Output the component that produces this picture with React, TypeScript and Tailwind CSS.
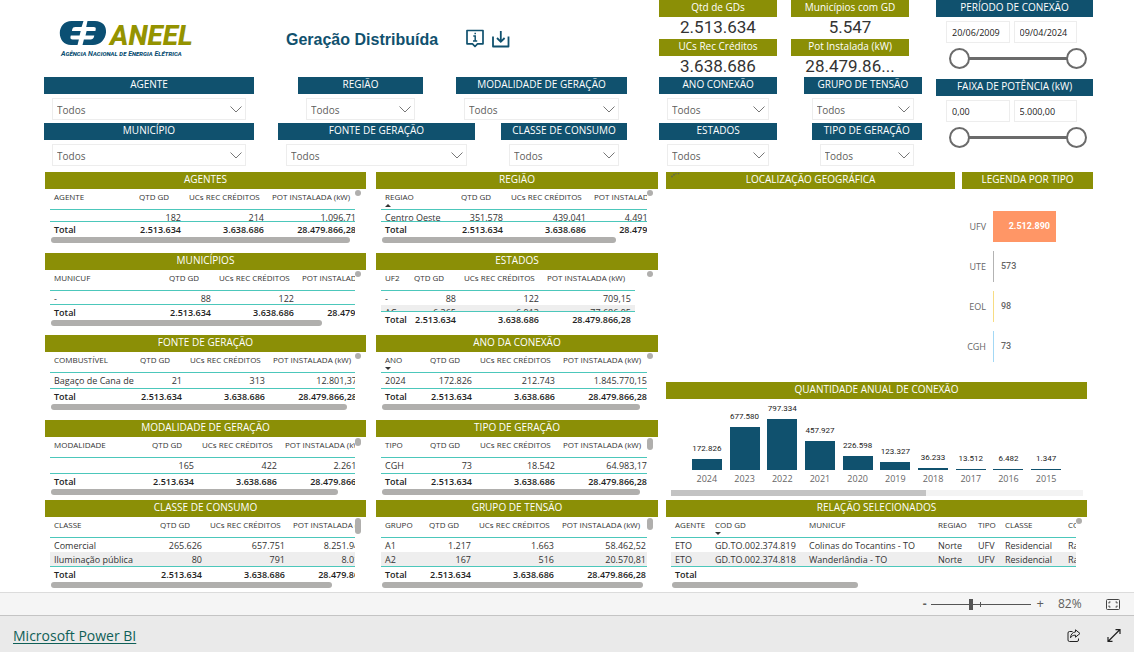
import React from "react";

type Sort = { column: number; direction: "up" | "down" };

type GridData = {
  title: string;
  cols: string;
  head: string[];
  rows: string[][];
  total: string[];
  bodyHeight: string;
  numericFrom: number;
  tableWidth?: string;
  sort?: Sort;
  thumb?: number;
  vThumb: string;
  spacing: string;
};

const METRICS = ["QTD GD", "UCs REC CRÉDITOS", "POT INSTALADA (kW)"];
const TOTALS = ["Total", "2.513.634", "3.638.686", "28.479.866,28"];

const leftTables: GridData[] = [
  {
    title: "AGENTES",
    cols: "grid-cols-[85px_50px_83px_92px]",
    head: ["AGENTE", ...METRICS],
    rows: [["", "182", "214", "1.096,71"]],
    total: TOTALS,
    bodyHeight: "h-[11px]",
    numericFrom: 1,
    thumb: 98,
    vThumb: "h-1.5",
    spacing: "mb-2.5",
  },
  {
    title: "MUNICÍPIOS",
    cols: "grid-cols-[115px_50px_83px_92px]",
    head: ["MUNICUF", ...METRICS],
    rows: [["-", "88", "122", "709,15"]],
    total: TOTALS,
    bodyHeight: "h-[13px]",
    numericFrom: 1,
    thumb: 89,
    vThumb: "h-1.5",
    spacing: "mb-[9px]",
  },
  {
    title: "FONTE DE GERAÇÃO",
    cols: "grid-cols-[86px_50px_83px_92px]",
    head: ["COMBUSTÍVEL", ...METRICS],
    rows: [["Bagaço de Cana de", "21", "313", "12.801,37"]],
    total: TOTALS,
    bodyHeight: "h-[15px]",
    numericFrom: 1,
    thumb: 97,
    vThumb: "h-1.5",
    spacing: "mb-2.5",
  },
  {
    title: "MODALIDADE DE GERAÇÃO",
    cols: "grid-cols-[98px_50px_83px_92px]",
    head: ["MODALIDADE", ...METRICS],
    rows: [["", "165", "422", "2.261,10"]],
    total: TOTALS,
    bodyHeight: "h-[15px]",
    numericFrom: 1,
    thumb: 94,
    vThumb: "h-2",
    spacing: "mb-[5px]",
  },
  {
    title: "CLASSE DE CONSUMO",
    cols: "grid-cols-[106px_50px_83px_92px]",
    head: ["CLASSE", ...METRICS],
    rows: [
      ["Comercial", "265.626", "657.751", "8.251.946,20"],
      ["Iluminação pública", "80", "791", "8.012,30"],
    ],
    total: TOTALS,
    bodyHeight: "h-[28px]",
    numericFrom: 1,
    thumb: 92,
    vThumb: "h-4",
    spacing: "mb-1",
  },
];

const middleTables: GridData[] = [
  {
    title: "REGIÃO",
    cols: "grid-cols-[76px_50px_83px_92px]",
    head: ["REGIAO", ...METRICS],
    rows: [["Centro Oeste", "351.578", "439.041", "4.491.020,11"]],
    total: TOTALS,
    bodyHeight: "h-[11px]",
    numericFrom: 1,
    sort: { column: 0, direction: "up" },
    thumb: 88,
    vThumb: "h-1.5",
    spacing: "mb-2.5",
  },
  {
    title: "ESTADOS",
    cols: "grid-cols-[29px_50px_83px_92px]",
    tableWidth: "w-[254px]",
    head: ["UF2", ...METRICS],
    rows: [
      ["-", "88", "122", "709,15"],
      ["AC", "6.365", "6.913", "77.686,95"],
    ],
    total: TOTALS,
    bodyHeight: "h-[20px]",
    numericFrom: 1,
    vThumb: "h-1.5",
    spacing: "mb-2",
  },
  {
    title: "ANO DA CONEXÃO",
    cols: "grid-cols-[45px_50px_83px_92px]",
    head: ["ANO", ...METRICS],
    rows: [["2024", "172.826", "212.743", "1.845.770,15"]],
    total: TOTALS,
    bodyHeight: "h-[15px]",
    numericFrom: 1,
    sort: { column: 0, direction: "down" },
    thumb: 97,
    vThumb: "h-1.5",
    spacing: "mb-2.5",
  },
  {
    title: "TIPO DE GERAÇÃO",
    cols: "grid-cols-[45px_50px_83px_92px]",
    head: ["TIPO", ...METRICS],
    rows: [["CGH", "73", "18.542", "64.983,17"]],
    total: TOTALS,
    bodyHeight: "h-[15px]",
    numericFrom: 1,
    thumb: 97,
    vThumb: "h-3",
    spacing: "mb-[5px]",
  },
  {
    title: "GRUPO DE TENSÃO",
    cols: "grid-cols-[44px_50px_83px_92px]",
    head: ["GRUPO", ...METRICS],
    rows: [
      ["A1", "1.217", "1.663", "58.462,52"],
      ["A2", "167", "516", "20.570,81"],
    ],
    total: TOTALS,
    bodyHeight: "h-[28px]",
    numericFrom: 1,
    thumb: 98,
    vThumb: "h-3",
    spacing: "mb-1",
  },
];

const selectedTable: GridData = {
  title: "RELAÇÃO SELECIONADOS",
  cols: "grid-cols-[40px_94px_129px_40px_27px_63px_60px]",
  head: ["AGENTE", "COD GD", "MUNICUF", "REGIAO", "TIPO", "CLASSE", "COMBUSTÍVEL"],
  rows: [
    ["ETO", "GD.TO.002.374.819", "Colinas do Tocantins - TO", "Norte", "UFV", "Residencial", "Radiação solar"],
    ["ETO", "GD.TO.002.374.818", "Wanderlândia - TO", "Norte", "UFV", "Residencial", "Radiação solar"],
  ],
  total: ["Total"],
  bodyHeight: "h-[28px]",
  numericFrom: 99,
  sort: { column: 1, direction: "down" },
  thumb: 46,
  vThumb: "h-1.5",
  spacing: "mb-1",
};

const years = [
  { year: "2024", label: "172.826", height: 11 },
  { year: "2023", label: "677.580", height: 43 },
  { year: "2022", label: "797.334", height: 51 },
  { year: "2021", label: "457.927", height: 29 },
  { year: "2020", label: "226.598", height: 14 },
  { year: "2019", label: "123.327", height: 8 },
  { year: "2018", label: "36.233", height: 2 },
  { year: "2017", label: "13.512", height: 1 },
  { year: "2016", label: "6.482", height: 1 },
  { year: "2015", label: "1.347", height: 1 },
];

const types = [
  { name: "UTE", value: "573", color: "bg-[#b3b3b3]" },
  { name: "EOL", value: "98", color: "bg-[#f7dc83]" },
  { name: "CGH", value: "73", color: "bg-[#a3d8f5]" },
];

function Bar({ children, tone = "olive" }: { children: React.ReactNode; tone?: "olive" | "blue" }) {
  return (
    <h2
      className={
        "h-[17px] text-center text-[10px] leading-[15px] whitespace-nowrap text-white " +
        (tone === "olive" ? "bg-[#8b8f06]" : "bg-[#10516e]")
      }
    >
      {children}
    </h2>
  );
}

function DataTable({ data }: { data: GridData }) {
  const align = (i: number) => (i >= data.numericFrom ? "text-right" : "text-left");
  return (
    <section className={data.spacing}>
      <Bar>{data.title}</Bar>
      <div className="flex px-[5px]">
        <div className="min-w-0 flex-1 overflow-hidden">
          <table className={"block text-[9px] whitespace-nowrap text-[#333] " + (data.tableWidth ?? "w-full")}>
            <thead className="block h-[21px] border-b border-[#4cc7bb]">
              <tr className={"grid " + data.cols}>
                {data.head.map((h, i) => (
                  <th key={h} scope="col" className="pt-0.5 pl-1 text-left text-[8px] leading-3 font-normal text-[#333]">
                    {h}
                    {data.sort?.column === i && (
                      <svg className="block" width="6" height="4" viewBox="0 0 6 4" aria-hidden="true">
                        <path d={data.sort.direction === "up" ? "M0 4 3 1 6 4Z" : "M0 1 3 4 6 1Z"} fill="#333" />
                      </svg>
                    )}
                  </th>
                ))}
              </tr>
            </thead>
            <tbody className={"block overflow-hidden " + data.bodyHeight}>
              {data.rows.map((row, r) => (
                <tr key={r} className={"grid h-3.5 " + data.cols + (r % 2 ? " bg-[#eeeeee]" : "")}>
                  {row.map((c, i) => (
                    <td key={i} className={"px-1 leading-[15px] " + align(i)}>
                      {c}
                    </td>
                  ))}
                </tr>
              ))}
            </tbody>
            <tfoot className="block h-4 border-t border-[#4cc7bb]">
              <tr className={"grid " + data.cols}>
                {data.total.map((c, i) => (
                  <td key={i} className={"px-1 leading-[15px] font-semibold text-[#222] " + align(i)}>
                    {c}
                  </td>
                ))}
              </tr>
            </tfoot>
          </table>
          {data.thumb && (
            <div className="h-1.5">
              <div className="ml-px h-1.5 rounded-full bg-[#b0afad]" style={{ width: `${data.thumb}%` }} />
            </div>
          )}
        </div>
        <div className={"mt-px w-1.5 rounded-full bg-[#b0afad] " + data.vThumb} />
      </div>
    </section>
  );
}

function Filter({ id, label, className }: { id: string; label: string; className: string }) {
  return (
    <div className={"min-w-0 " + className}>
      <label
        htmlFor={id}
        className="block h-[17px] bg-[#10516e] text-center text-[10px] leading-[15px] whitespace-nowrap text-white"
      >
        {label}
      </label>
      <div className="mx-2 mt-1 grid items-center">
        <select
          id={id}
          className="col-start-1 row-start-1 h-[22px] w-full appearance-none border border-[#ededed] bg-white pt-0.5 pl-1 text-[10px] text-[#605e5c]"
        >
          <option>Todos</option>
        </select>
        <svg
          className="pointer-events-none col-start-1 row-start-1 mr-1 justify-self-end"
          width="12"
          height="7"
          viewBox="0 0 12 7"
          fill="none"
          stroke="#777"
          aria-hidden="true"
        >
          <path d="M.5.5 6 6 11.5.5" />
        </svg>
      </div>
    </div>
  );
}

function Kpi({ label, value }: { label: string; value: string }) {
  return (
    <div>
      <Bar>{label}</Bar>
      <p className="h-[22px] text-center font-[Roboto,sans-serif] text-[17px] leading-[21px] text-[#333]">
        {value}
      </p>
    </div>
  );
}

const thumbStyle =
  "pointer-events-none col-start-1 row-start-1 h-[21px] w-full appearance-none bg-transparent [&::-webkit-slider-thumb]:pointer-events-auto [&::-webkit-slider-thumb]:size-[21px] [&::-webkit-slider-thumb]:appearance-none [&::-webkit-slider-thumb]:rounded-full [&::-webkit-slider-thumb]:border-2 [&::-webkit-slider-thumb]:border-[#6b6b6b] [&::-webkit-slider-thumb]:bg-white";

function RangeFilter({ title, from, to }: { title: string; from: string; to: string }) {
  const box = "h-[22px] w-full min-w-0 border border-[#ededed] bg-white px-[5px] text-[9px] text-[#222]";
  return (
    <div className="h-[79px]">
      <Bar tone="blue">{title}</Bar>
      <div className="mt-1 mr-4 ml-2.5 grid grid-cols-2 gap-1">
        <input aria-label={title} className={box} defaultValue={from} />
        <input aria-label={title} className={box} defaultValue={to} />
      </div>
      <div className="mt-[5px] mr-1.5 ml-[13px] grid items-center">
        <div className="col-start-1 row-start-1 mx-2 h-[3px] bg-[#6b6b6b]" />
        <input type="range" aria-label={title} min={0} max={100} defaultValue={0} className={thumbStyle} />
        <input type="range" aria-label={title} min={0} max={100} defaultValue={100} className={thumbStyle} />
      </div>
    </div>
  );
}

function Logo() {
  return (
    <svg width="134" height="40" viewBox="0 0 134 40" className="overflow-visible" role="img" aria-label="ANEEL">
      <g fill="#0b4f73">
        <path d="M21.500 1H12.500C5.500 1 .8 6.500.8 13S5 25 12 25h6.500l1.400-5.400h-6.200c-1.900 0-2.600-1.100-2.200-2.800l.3-1.400h8.800l1.100-4.500h-8.800l.3-1.300c.4-1.700 1.400-2.500 3.100-2.500h6.300L24.500 1Z" />
        <path d="M28.500 1H36c7.500 0 11.700 5 11 11.500C46.300 19.500 41.200 25 34 25H23.500l1.400-5.400h6.700c1.800 0 2.900-.9 3.300-2.500l.4-1.700h-8.800l1.100-4.500h8.800l.3-1.300c.4-1.700-.3-2.500-2-2.500h-7.500Z" />
      </g>
      <text x="51" y="25" fill="#949300" fontFamily="Roboto, sans-serif" fontSize="28" fontWeight="800" fontStyle="italic">
        ANEEL
      </text>
      <text x="2" y="36" fill="#0b4f73" fontFamily="Roboto, sans-serif" fontSize="7" fontWeight="700" fontStyle="italic" fontVariant="small-caps">
        Agência Nacional de Energia Elétrica
      </text>
    </svg>
  );
}

export default function App() {
  return (
    <div className="bg-white font-['Open_Sans','Noto_Sans',sans-serif]">
      <main>
        <div className="flex pr-[41px] pl-11">
          <div className="mr-8 min-w-0 flex-[583]">
            <header className="flex h-[77px] items-start pt-5 pl-[15px]">
              <Logo />
              <h1 className="ml-[93px] pt-2 font-['Liberation_Sans',sans-serif] text-[16px] leading-6 font-bold whitespace-nowrap text-[#10516e]">
                Geração Distribuída
              </h1>
              <button aria-label="Informações" className="mt-[9px] ml-7">
                <svg width="18" height="19" viewBox="0 0 18 19" fill="none" stroke="#10516e" strokeWidth="1.700">
                  <path d="M1 1.500h16v13.300h-5.500L9 17.500l-2.500-2.700H1Z" strokeLinejoin="round" />
                  <path d="M7.300 7H9.200v5M7 12h4.200M9.200 3.700v1.600" strokeWidth="1.500" />
                </svg>
              </button>
              <button aria-label="Baixar" className="mt-2.5 ml-2">
                <svg width="18" height="18" viewBox="0 0 18 18" fill="none" stroke="#10516e" strokeWidth="1.800">
                  <path d="M1 6.500V16.500H16.500V6.500" strokeLinejoin="round" />
                  <path d="M8.800 1v10.500M5 8l3.800 3.800L12.600 8" />
                </svg>
              </button>
            </header>
            <div className="flex h-[46px]">
              <Filter id="agente" label="AGENTE" className="flex-[210]" />
              <Filter id="regiao" label="REGIÃO" className="ml-11 flex-[125]" />
              <Filter id="modalidade" label="MODALIDADE DE GERAÇÃO" className="ml-[33px] flex-[171]" />
            </div>
            <div className="flex h-[45px]">
              <Filter id="municipio" label="MUNICÍPIO" className="flex-[210]" />
              <Filter id="fonte" label="FONTE DE GERAÇÃO" className="ml-6 flex-[197]" />
              <Filter id="classe" label="CLASSE DE CONSUMO" className="ml-[26px] flex-[126]" />
            </div>
          </div>
          <div className="mr-3.5 min-w-0 flex-[263]">
            <div className="grid h-[77px] grid-cols-2 content-start gap-x-3.5 pr-[13px]">
              <Kpi label="Qtd de GDs" value="2.513.634" />
              <Kpi label="Municípios com GD" value="5.547" />
              <Kpi label="UCs Rec Créditos" value="3.638.686" />
              <Kpi label="Pot Instalada (kW)" value="28.479.86..." />
            </div>
            <div className="flex h-[46px] justify-between">
              <Filter id="ano" label="ANO CONEXÃO" className="w-[45%]" />
              <Filter id="grupo" label="GRUPO DE TENSÃO" className="w-[45%]" />
            </div>
            <div className="flex h-[45px] justify-between">
              <Filter id="estado" label="ESTADOS" className="w-[45%]" />
              <Filter id="tipo" label="TIPO DE GERAÇÃO" className="w-[42%]" />
            </div>
          </div>
          <div className="min-w-0 flex-[157]">
            <RangeFilter title="PERÍODO DE CONEXÃO" from="20/06/2009" to="09/04/2024" />
            <RangeFilter title="FAIXA DE POTÊNCIA (kW)" from="0,00" to="5.000,00" />
          </div>
        </div>

        <div className="mt-1 flex pr-[41px] pl-[45px]">
          <div className="mr-2.5 min-w-0 flex-[321]">
            {leftTables.map((t) => (
              <DataTable key={t.title} data={t} />
            ))}
          </div>
          <div className="mr-2 min-w-0 flex-[282]">
            {middleTables.map((t) => (
              <DataTable key={t.title} data={t} />
            ))}
          </div>
          <div className="min-w-0 flex-[427]">
            <div className="flex h-[210px] gap-[7px]">
              <section className="relative min-w-0 flex-[289]">
                <Bar>LOCALIZAÇÃO GEOGRÁFICA</Bar>
                <svg className="absolute top-0 left-1" width="10" height="6" viewBox="0 0 10 6" fill="#666a48" aria-hidden="true">
                  <circle cx="2" cy="4.500" r="1" />
                  <circle cx="4" cy="2.800" r="1" />
                  <circle cx="6" cy="1.800" r=".8" />
                  <circle cx="8.500" cy="1.600" r=".8" />
                </svg>
              </section>
              <section className="min-w-0 flex-[131]">
                <Bar>LEGENDA POR TIPO</Bar>
                <ul className="mt-[22px] grid gap-[9px] text-[9px] text-[#666]">
                  <li className="flex h-[31px] items-center">
                    <span className="mr-[7px] w-6 text-right">UFV</span>
                    <span className="flex h-full w-[63px] items-center justify-end bg-[#ff9666] pr-1.5 font-[Roboto,sans-serif] font-bold text-white">
                      2.512.890
                    </span>
                  </li>
                  {types.map((t) => (
                    <li key={t.name} className="flex h-[31px] items-center">
                      <span className="mr-[7px] w-6 text-right">{t.name}</span>
                      <span className={"mr-[7px] h-full w-px " + t.color} />
                      <span className="font-[Roboto,sans-serif] font-medium">{t.value}</span>
                    </li>
                  ))}
                </ul>
              </section>
            </div>
            <section className="mr-1.5 h-[118px]">
              <Bar>QUANTIDADE ANUAL DE CONEXÃO</Bar>
              <div className="mx-[22px] grid h-[71px] grid-cols-10">
                {years.map((y) => (
                  <div key={y.year} className="flex flex-col items-center justify-end">
                    <span className="mb-1 font-[Roboto,sans-serif] text-[8px] leading-3 text-[#222]">{y.label}</span>
                    <div className="w-[30px] bg-[#10516e]" style={{ height: y.height }} />
                  </div>
                ))}
              </div>
              <div className="mx-[22px] mt-0.5 grid grid-cols-10 text-center text-[9px] leading-[14px] text-[#666]">
                {years.map((y) => (
                  <span key={y.year}>{y.year}</span>
                ))}
              </div>
              <div className="mt-1 mr-1 ml-[5px] h-1.5 bg-[#f3f3f3]">
                <div className="h-1.5 w-[62%] bg-[#c3c3c3]" />
              </div>
            </section>
            <div className="mr-1.5">
              <DataTable data={selectedTable} />
            </div>
          </div>
        </div>
      </main>

      <div className="flex h-6 items-center justify-end border-y border-t-[#dcdcdc] border-b-[#c4c4c4] bg-[#f5f5f5] pr-3.5 text-[12px] text-[#605e5c]">
        <button aria-label="Reduzir" className="mr-1 font-bold">-</button>
        <div className="grid w-[100px] items-center">
          <div className="col-start-1 row-start-1 h-px bg-[#555]" />
          <div className="col-start-1 row-start-1 h-[5px] w-px justify-self-center bg-[#555]" />
          <input
            type="range"
            aria-label="Zoom"
            min={0}
            max={100}
            defaultValue={40}
            className="col-start-1 row-start-1 h-3 w-full appearance-none bg-transparent [&::-webkit-slider-thumb]:h-[11px] [&::-webkit-slider-thumb]:w-1 [&::-webkit-slider-thumb]:appearance-none [&::-webkit-slider-thumb]:bg-[#555]"
          />
        </div>
        <button aria-label="Ampliar" className="ml-1.5 text-[13px]">+</button>
        <span className="ml-3.5 w-[25px]">82%</span>
        <button aria-label="Ajustar à página" className="ml-[23px]">
          <svg width="14" height="11" viewBox="0 0 14 11" fill="none" stroke="#444" aria-hidden="true">
            <rect x=".5" y=".5" width="13" height="10" rx="1" />
            <path d="M3 4.500V3h1.500M9.500 3H11v1.500M11 6.500V8H9.500M4.500 8H3V6.500" />
          </svg>
        </button>
      </div>
      <footer className="flex h-9 items-center bg-[#eaeaea] pt-0.5 pr-[13px] pl-[13px]">
        <a href="https://powerbi.microsoft.com" className="text-[14px] text-[#0f5f57] underline underline-offset-2">
          Microsoft Power BI
        </a>
        <button aria-label="Compartilhar" className="ml-auto">
          <svg width="14" height="13" viewBox="0 0 14 13" fill="none" stroke="#222" strokeLinejoin="round" aria-hidden="true">
            <path d="M5.500 2.500H2.500a1.500 1.500 0 0 0-1.500 1.500v7a1.500 1.500 0 0 0 1.500 1.500h7.500a1.500 1.500 0 0 0 1.500-1.500V9.500" />
            <path d="M8.500.8 13 4.500 8.500 8.200V6.200C6 6 4.500 7 3.500 8.800 3.700 5.500 5.500 3.200 8.500 2.900Z" />
          </svg>
        </button>
        <button aria-label="Tela cheia" className="ml-[26px]">
          <svg width="14" height="13" viewBox="0 0 14 13" fill="none" stroke="#222" strokeWidth="1.200" aria-hidden="true">
            <path d="M1.500 12 12.500 1M8.500.7H13V5M1 8v4.400h4.500" />
          </svg>
        </button>
      </footer>
    </div>
  );
}
